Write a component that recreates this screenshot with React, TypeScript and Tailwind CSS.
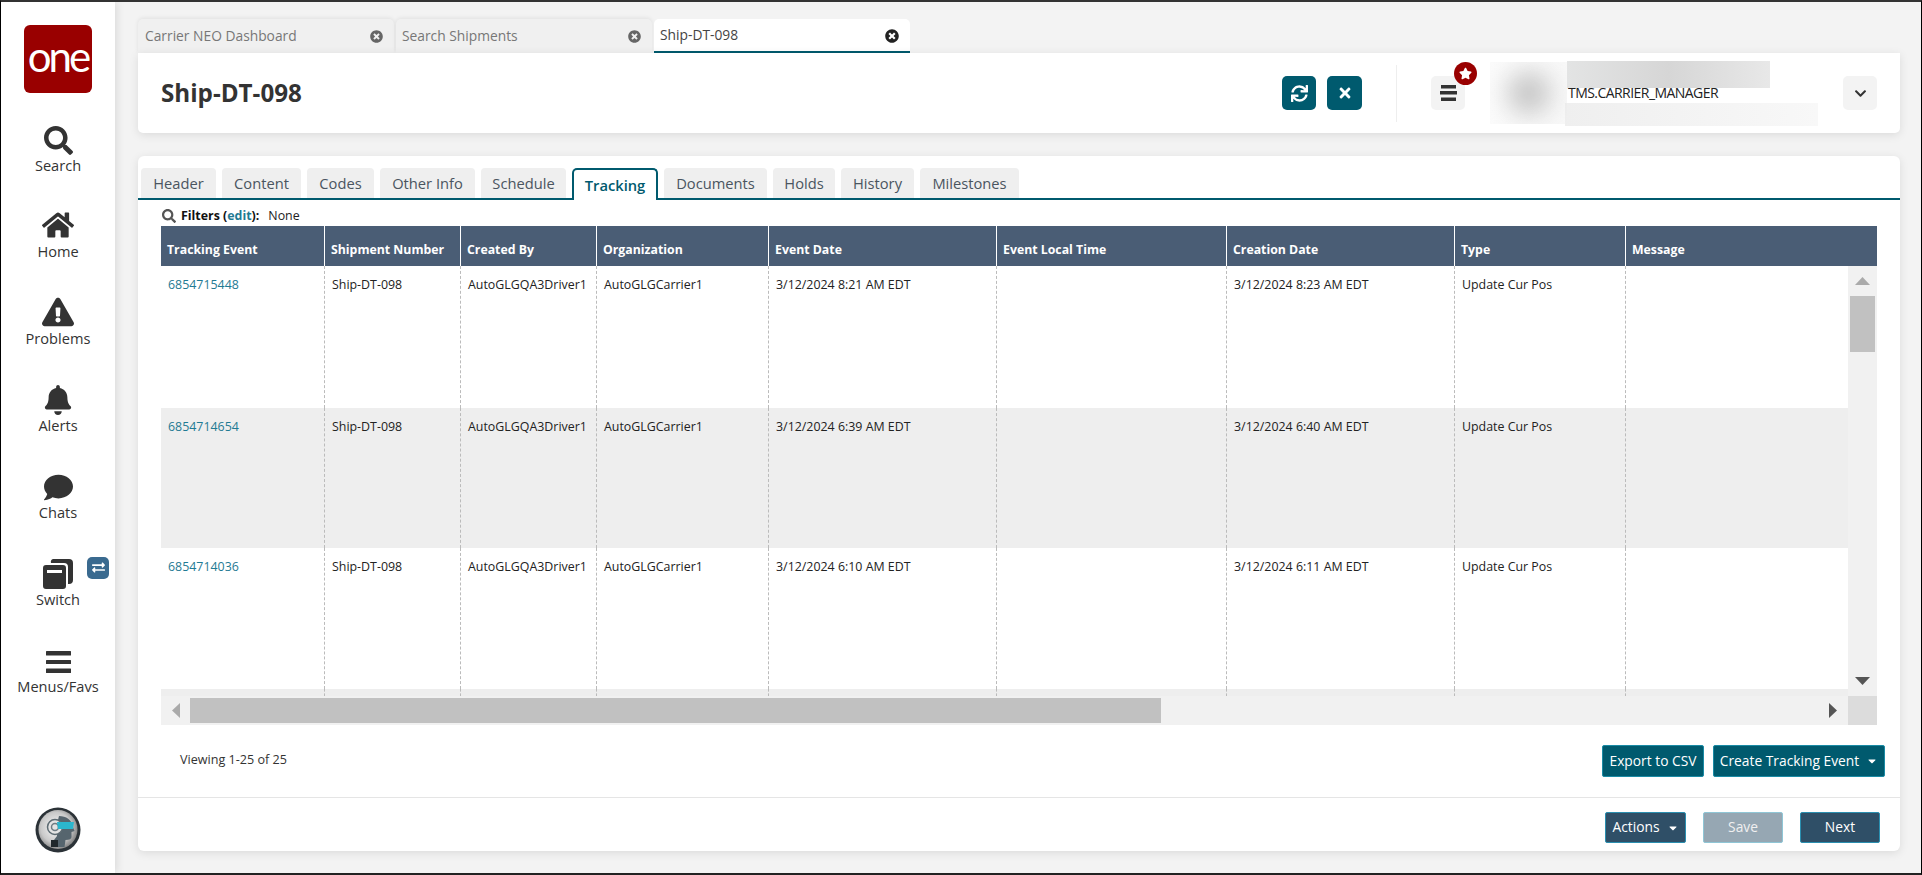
import React from 'react';
import {
  FaSearch,
  FaHome,
  FaExclamationTriangle,
  FaBell,
  FaComment,
  FaExchangeAlt,
  FaTimesCircle,
  FaSync,
  FaTimes,
  FaStar,
  FaChevronDown,
  FaCaretDown,
} from 'react-icons/fa';

const SwitchIcon = () => (
  <svg width="30" height="30" viewBox="0 0 30 30">
    <path d="M10 0h16a4 4 0 0 1 4 4v17a4 4 0 0 1-4 4h-1V8a4 4 0 0 0-4-4H8a3 3 0 0 1 2-4z" fill="#333" />
    <path fillRule="evenodd" d="M3 6h17a3 3 0 0 1 3 3v18a3 3 0 0 1-3 3H3a3 3 0 0 1-3-3V9a3 3 0 0 1 3-3zm1 5v3h15v-3z" fill="#333" />
  </svg>
);

const MenuIcon = () => (
  <svg width="25" height="22" viewBox="0 0 25 22" fill="#333" className="mb-[3px]">
    <rect x="0" y="0" width="25" height="4.5" rx="0.5" />
    <rect x="0" y="9" width="25" height="4" rx="0.5" />
    <rect x="0" y="17.5" width="25" height="4.5" rx="0.5" />
  </svg>
);

const BrainAvatar = () => (
  <svg width="46" height="46" viewBox="0 0 46 46">
    <defs>
      <radialGradient id="avatarBg" cx="45%" cy="45%" r="60%">
        <stop offset="0%" stopColor="#fafafa" />
        <stop offset="65%" stopColor="#c9c9c9" />
        <stop offset="100%" stopColor="#777" />
      </radialGradient>
    </defs>
    <circle cx="23" cy="23" r="22.5" fill="#2b3237" />
    <circle cx="23" cy="22.5" r="19.5" fill="url(#avatarBg)" />
    <path d="M24 9c7 0 13 4 13.500 10l2 5-3 1v5c0 2-2 3-6 3l-1 7H19v-7l3-4-1-8z" fill="#56656e" />
    <circle cx="20" cy="20" r="7.500" fill="#e4e4e4" stroke="#5d6b72" strokeWidth="1.5" />
    <circle cx="20" cy="20" r="3.500" fill="none" stroke="#6f7c83" strokeWidth="1.5" />
    <path d="M22 15h17l-1 7H23z" fill="#2bb6cd" />
    <path d="M16 33h7v7h-7z" fill="#20282c" />
  </svg>
);

const navItems = [
  { label: 'Search', icon: <FaSearch size={29} color="#333" /> },
  { label: 'Home', icon: <FaHome size={32} color="#333" /> },
  { label: 'Problems', icon: <FaExclamationTriangle size={32} color="#333" /> },
  { label: 'Alerts', icon: <FaBell size={30} color="#333" /> },
  { label: 'Chats', icon: <FaComment size={29} color="#333" /> },
  { label: 'Switch', icon: <SwitchIcon />, badge: true },
  { label: 'Menus/Favs', icon: <MenuIcon /> },
];

const pageTabs = [
  { label: 'Carrier NEO Dashboard', pad: 'pl-[7px]' },
  { label: 'Search Shipments', pad: 'pl-[6px]' },
  { label: 'Ship-DT-098', pad: 'pl-[6px]', active: true },
];

const detailTabs = [
  { label: 'Header', width: 'w-[75px]' },
  { label: 'Content', width: 'w-[79px]' },
  { label: 'Codes', width: 'w-[67px]' },
  { label: 'Other Info', width: 'w-[95px]' },
  { label: 'Schedule', width: 'w-[85px]' },
  { label: 'Tracking', width: 'w-[86px]', active: true },
  { label: 'Documents', width: 'w-[103px]' },
  { label: 'Holds', width: 'w-[62px]' },
  { label: 'History', width: 'w-[73px]' },
  { label: 'Milestones', width: 'w-[99px]' },
];

const columns = ['Tracking Event', 'Shipment Number', 'Created By', 'Organization', 'Event Date', 'Event Local Time', 'Creation Date', 'Type', 'Message'];

const rows = [
  { id: '6854715448', eventDate: '3/12/2024 8:21 AM EDT', created: '3/12/2024 8:23 AM EDT', className: 'h-[142px] bg-white' },
  { id: '6854714654', eventDate: '3/12/2024 6:39 AM EDT', created: '3/12/2024 6:40 AM EDT', className: 'h-[140px] bg-[#eeeeee]' },
  { id: '6854714036', eventDate: '3/12/2024 6:10 AM EDT', created: '3/12/2024 6:11 AM EDT', className: 'h-[141px] bg-white' },
];

const gridCols = 'grid grid-cols-[164px_136px_136px_172px_228px_230px_228px_171px_251px]';

const Triangle = ({ dir, color }: { dir: 'up' | 'down' | 'left' | 'right'; color: string }) => {
  const points = {
    up: '0,10 7.5,2 15,10',
    down: '0,2 15,2 7.5,10',
    left: '9,0 9,15 1,7.5',
    right: '1,0 9,7.5 1,15',
  }[dir];
  const vertical = dir === 'up' || dir === 'down';
  return (
    <svg width={vertical ? 15 : 10} height={vertical ? 12 : 15} viewBox={vertical ? '0 0 15 12' : '0 0 10 15'}>
      <polygon points={points} fill={color} />
    </svg>
  );
};

export default function App() {
  return (
    <div className="flex h-[875px] w-[1922px] overflow-hidden border-t-2 border-b-2 border-x border-t-[#333] border-b-[#222] border-x-black bg-[#f3f3f3] font-['Open_Sans',sans-serif] text-[#333]">
      {/* Left nav */}
      <aside className="flex w-[114px] shrink-0 flex-col items-center bg-white pt-[23px] shadow-[2px_0_8px_rgba(0,0,0,0.1)]">
        <div className="flex h-[68px] w-[68px] items-center justify-center rounded-[6px] bg-[#990000] pb-[6px] font-['Lato',sans-serif] text-[42px] leading-none tracking-[-3px] text-white">
          one
        </div>
        <nav className="mt-[27.5px] flex flex-col items-center">
          {navItems.map((item) => (
            <div key={item.label} className="relative flex h-[86.9px] w-[114px] flex-col items-center">
              <div className="flex h-[34px] items-end">{item.icon}</div>
              <span className="h-5 text-[14.6px] leading-5">{item.label}</span>
              {item.badge && (
                <span className="absolute left-[86px] top-[2px] flex h-[22px] w-[22px] items-center justify-center rounded-[5px] bg-[#3a6a8f]">
                  <FaExchangeAlt size={13} color="#fff" />
                </span>
              )}
            </div>
          ))}
        </nav>
        <div className="mt-auto mb-[20px]">
          <BrainAvatar />
        </div>
      </aside>

      <main className="flex w-[1762px] shrink-0 flex-col pt-[17px] ml-[23px]">
        {/* Page tabs */}
        <div className="flex h-[34px] gap-[2px]">
          {pageTabs.map((tab) => (
            <div
              key={tab.label}
              className={
                tab.active
                  ? `flex h-[34px] w-[256px] items-center justify-between rounded-t-[5px] border-b-2 border-[#005a6e] bg-white pt-[1px] pr-[11px] text-[13.8px] text-[#444] ${tab.pad}`
                  : `flex h-[34px] w-[256px] items-center justify-between rounded-t-[5px] bg-[#f0f0f0] pt-[1px] pr-[11px] text-[13.8px] text-[#777] shadow-[0_-1px_4px_rgba(0,0,0,0.08)] ${tab.pad}`
              }
            >
              <span>{tab.label}</span>
              <FaTimesCircle size={tab.active ? 14 : 13} color={tab.active ? '#222' : '#666'} />
            </div>
          ))}
        </div>

        {/* Title card */}
        <header className="flex h-[80px] items-center rounded-b-[5px] bg-white pl-[23px] pr-[23px] shadow-[0_2px_10px_rgba(0,0,0,0.1)]">
          <h1 className="pt-[1px] text-[24.2px] font-bold text-[#333]">Ship-DT-098</h1>
          <div className="ml-auto flex items-center">
            <button className="flex h-[34px] w-[34px] items-center justify-center rounded-[5px] bg-[#005a6e]">
              <FaSync size={17} color="#fff" />
            </button>
            <button className="ml-[11px] flex h-[34px] w-[35px] items-center justify-center rounded-[5px] bg-[#005a6e]">
              <FaTimes size={16} color="#fff" />
            </button>
            <div className="ml-[34px] h-[57px] w-px bg-[#eeeeee]" />
            <div className="relative ml-[34px]">
              <button className="flex h-[34px] w-[34px] items-center justify-center rounded-[5px] bg-[#f3f3f3]">
                <svg width="17" height="16" viewBox="0 0 17 16" fill="#333">
                  <rect x="1" y="0" width="15" height="3.5" />
                  <rect x="0" y="6" width="17" height="3.5" />
                  <rect x="1" y="12.5" width="15" height="3.5" />
                </svg>
              </button>
              <span className="absolute left-[23px] top-[-14px] flex h-[23px] w-[23px] items-center justify-center rounded-full bg-[#990000]">
                <FaStar size={13} color="#fff" />
              </span>
            </div>
            {/* Blurred user details */}
            <div className="ml-[25px] flex h-[62px] w-[77px] items-center justify-center overflow-hidden bg-linear-to-r from-[#fbfbfb] to-[#f8f8f8]">
              <div className="h-[44px] w-[44px] rounded-full bg-[#c8c8c8] blur-md" />
            </div>
            <div className="flex h-[65px] w-[251px] flex-col">
              <div className="h-[27px] w-[203px] bg-linear-to-r from-[#e3e4e4] via-[#d6d6d6] to-[#e8e8e8]" />
              <div className="ml-[1px] h-[15px] whitespace-nowrap text-[14px] leading-[10px] tracking-[-0.55px] text-[#222]">TMS.CARRIER_MANAGER</div>
              <div className="-ml-[2px] h-[23px] w-[253px] bg-linear-to-r from-[#efefef] to-[#f8f8f8]" />
            </div>
            <button className="ml-[25px] flex h-[34px] w-[34px] items-center justify-center rounded-[5px] bg-[#f3f3f3]">
              <FaChevronDown size={13} color="#333" />
            </button>
          </div>
        </header>

        {/* Tracking card */}
        <section className="mt-[23px] flex h-[695px] flex-col rounded-[6px] bg-white pt-[12px] shadow-[0_2px_10px_rgba(0,0,0,0.1)]">
          <div className="flex h-[32px] items-end gap-[6px] border-b-2 border-[#005a6e] pl-[3px]">
            {detailTabs.map((tab) =>
              tab.active ? (
                <div
                  key={tab.label}
                  className={`-mb-[2px] flex h-[32px] items-center justify-center rounded-t-[5px] border-2 border-b-0 border-[#005a6e] bg-white pt-[1px] text-[14.7px] font-semibold text-[#005a6e] ${tab.width}`}
                >
                  {tab.label}
                </div>
              ) : (
                <div
                  key={tab.label}
                  className={`flex h-[30px] items-center justify-center rounded-t-[4px] bg-[#efefef] pt-[1px] text-[14.7px] text-[#4a5560] ${tab.width}`}
                >
                  {tab.label}
                </div>
              ),
            )}
          </div>

          <div className="flex h-[26px] items-center pl-[24px] pt-[6px] text-[12.4px] text-[#222]">
            <FaSearch size={14} color="#555" />
            <span className="ml-[5px] font-bold text-[#111]">
              Filters (<span className="text-[#1f7a93]">edit</span>):
            </span>
            <span className="ml-[9px]">None</span>
          </div>

          <div className="mx-[23px] flex flex-col">
            {/* Table head */}
            <div className={`${gridCols} h-[40px] bg-[#4a5d75]`}>
              {columns.map((col, i) => (
                <div
                  key={col}
                  className={
                    i === columns.length - 1
                      ? 'flex items-center pl-[6px] pt-[8px] text-[12.3px] font-bold text-white'
                      : 'flex items-center border-r border-white pl-[6px] pt-[8px] text-[12.3px] font-bold text-white'
                  }
                >
                  {col}
                </div>
              ))}
            </div>

            {/* Table body and vertical scrollbar */}
            <div className="flex h-[430px]">
              <div className="w-[1687px] overflow-hidden">
                {rows.map((row) => (
                  <div key={row.id} className={`${gridCols} ${row.className} w-[1716px] text-[12.4px] text-[#222]`}>
                    <div className="border-r border-dashed border-[#bbbbbb] pl-[7px] pt-[10px] text-[#1f7a93]">{row.id}</div>
                    <div className="border-r border-dashed border-[#bbbbbb] pl-[7px] pt-[10px]">Ship-DT-098</div>
                    <div className="border-r border-dashed border-[#bbbbbb] pl-[7px] pt-[10px]">AutoGLGQA3Driver1</div>
                    <div className="border-r border-dashed border-[#bbbbbb] pl-[7px] pt-[10px]">AutoGLGCarrier1</div>
                    <div className="border-r border-dashed border-[#bbbbbb] pl-[7px] pt-[10px]">{row.eventDate}</div>
                    <div className="border-r border-dashed border-[#bbbbbb]" />
                    <div className="border-r border-dashed border-[#bbbbbb] pl-[7px] pt-[10px]">{row.created}</div>
                    <div className="border-r border-dashed border-[#bbbbbb] pl-[7px] pt-[10px]">Update Cur Pos</div>
                    <div />
                  </div>
                ))}
                {/* Top sliver of the next striped row */}
                <div className={`${gridCols} h-[7px] w-[1716px] bg-[#eeeeee]`}>
                  {columns.slice(0, 8).map((col) => (
                    <div key={col} className="border-r border-dashed border-[#bbbbbb]" />
                  ))}
                </div>
              </div>
              <div className="flex w-[29px] flex-col items-center bg-[#f1f1f1]">
                <div className="flex h-[30px] items-center">
                  <Triangle dir="up" color="#aaaaaa" />
                </div>
                <div className="h-[56px] w-[25px] bg-[#c1c1c1]" />
                <div className="mt-auto mb-[9px] flex">
                  <Triangle dir="down" color="#555555" />
                </div>
              </div>
            </div>

            {/* Horizontal scrollbar */}
            <div className="flex h-[29px]">
              <div className="flex w-[1687px] items-center bg-[#f1f1f1]">
                <div className="flex w-[29px] justify-center">
                  <Triangle dir="left" color="#aaaaaa" />
                </div>
                <div className="h-[25px] w-[971px] bg-[#c1c1c1]" />
                <div className="ml-auto mr-[10px] flex">
                  <Triangle dir="right" color="#555555" />
                </div>
              </div>
              <div className="w-[29px] bg-[#dcdcdc]" />
            </div>
          </div>

          {/* Grid footer */}
          <div className="flex h-[72px] pl-[42px] pr-[15px] pt-[20px]">
            <span className="mt-[5px] text-[12.6px] leading-[20px] text-[#333]">Viewing 1-25 of 25</span>
            <div className="ml-auto flex gap-[9px]">
              <button className="h-[32px] w-[102px] rounded-[2px] border border-[#1a8ba5] bg-[#005a6e] text-[13.8px] text-white">Export to CSV</button>
              <button className="flex h-[32px] w-[172px] items-center justify-center gap-[7px] rounded-[2px] border border-[#1a8ba5] bg-[#005a6e] text-[13.8px] text-white">
                Create Tracking Event
                <FaCaretDown size={12} color="#fff" />
              </button>
            </div>
          </div>

          {/* Page footer */}
          <div className="flex flex-1 justify-end gap-[17px] border-t border-[#e5e5e5] pr-[20px] pt-[14px]">
            <button className="flex h-[31px] w-[81px] items-center justify-center gap-[7px] rounded-[2px] border border-[#2a8fb0] bg-[#2f4f67] text-[13.8px] text-white">
              Actions
              <FaCaretDown size={12} color="#fff" />
            </button>
            <button className="h-[31px] w-[80px] rounded-[2px] border border-[#8fc6d6] bg-[#96a7b3] text-[13.8px] text-[#f0f0f0]">Save</button>
            <button className="h-[31px] w-[80px] rounded-[2px] border border-[#2a8fb0] bg-[#2f4f67] text-[13.8px] text-white">Next</button>
          </div>
        </section>
      </main>
    </div>
  );
}
